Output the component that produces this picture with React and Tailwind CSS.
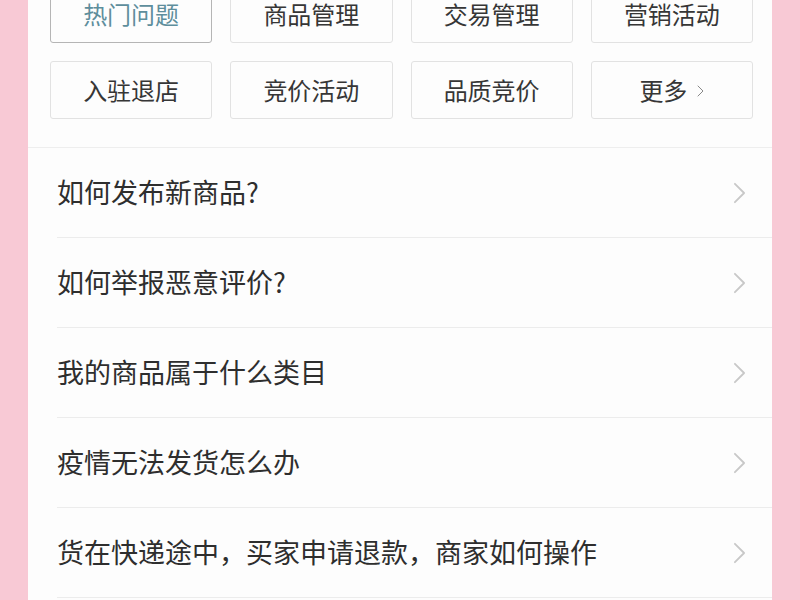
import React from "react";

const tabs = [
  { label: "热门问题", active: true },
  { label: "商品管理" },
  { label: "交易管理" },
  { label: "营销活动" },
  { label: "入驻退店" },
  { label: "竞价活动" },
  { label: "品质竞价" },
  { label: "更多", more: true },
];

const questions = [
  "如何发布新商品?",
  "如何举报恶意评价?",
  "我的商品属于什么类目",
  "疫情无法发货怎么办",
  "货在快递途中，买家申请退款，商家如何操作",
];

function Chevron({ className }) {
  return (
    <svg viewBox="0 0 14 24" fill="none" className={className}>
      <path d="M2 2l10 10L2 22" stroke="currentColor" strokeWidth="2" strokeLinecap="round" strokeLinejoin="round" />
    </svg>
  );
}

export default function App() {
  return (
    <div
      className="h-[600px] w-[800px] overflow-hidden bg-[#f8c9d5] px-[28px]"
      style={{ fontFamily: '"Noto Sans CJK SC", "Noto Sans", sans-serif' }}
    >
      <div className="h-[640px] bg-[#fdfdfd]">
        <div className="-mt-[15px] grid grid-cols-4 gap-[18px] pb-[28px] pl-[22px] pr-[19px]">
          {tabs.map((t) => (
            <div
              key={t.label}
              className={`flex h-[58px] items-center justify-center gap-[10px] rounded-[3px] border text-[24px] ${
                t.active ? "border-[#b5b5b5] text-[#5e8e9c]" : "border-[#e2e2e2] text-[#363636]"
              }`}
            >
              <span>{t.label}</span>
              {t.more && <Chevron className="mt-[2px] h-[12px] w-[7px] text-[#888]" />}
            </div>
          ))}
        </div>

        <div className="border-t border-[#eeeeee]">
          {questions.map((q) => (
            <div key={q} className="ml-[29px] flex h-[90px] items-center justify-between border-b border-[#ececec] pr-[26px]">
              <span className="text-[27px] text-[#2e2e2e]">{q}</span>
              <Chevron className="h-[22px] w-[13px] text-[#c8c8c8]" />
            </div>
          ))}
        </div>
      </div>
    </div>
  );
}
